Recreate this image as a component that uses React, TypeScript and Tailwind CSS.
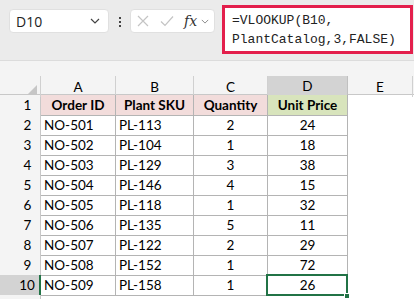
import React from 'react';

const rows = [
  ['NO-501', 'PL-113', '2', '24'],
  ['NO-502', 'PL-104', '1', '18'],
  ['NO-503', 'PL-129', '3', '38'],
  ['NO-504', 'PL-146', '4', '15'],
  ['NO-505', 'PL-118', '1', '32'],
  ['NO-506', 'PL-135', '5', '11'],
  ['NO-507', 'PL-122', '2', '29'],
  ['NO-508', 'PL-152', '1', '72'],
  ['NO-509', 'PL-158', '1', '26'],
];

const cols = 'grid grid-cols-[41px_75px_78px_74px_80px_65px_1fr]';
const cell = "font-['Lato',sans-serif] text-[13.5px] text-black";

function Chevron({ className }: { className?: string }) {
  return (
    <svg viewBox="0 0 10 6" className={className} fill="none" stroke="currentColor" strokeWidth="1.2">
      <path d="M1 1l4 4 4-4" />
    </svg>
  );
}

function FormulaBar() {
  return (
    <div className="h-[60px] bg-[#ebebeb] flex items-start">
      <div className="ml-[9px] mt-[9px] w-[100px] h-[24px] bg-white rounded-[4px] border border-[#e0e0e0] flex items-center justify-between pl-[6px] pr-[8px]">
        <span className="font-['Open_Sans',sans-serif] text-[14px] text-[#222]">D10</span>
        <Chevron className="w-[10px] h-[6px] text-[#444]" />
      </div>
      <div className="mt-[17px] ml-[10px] flex flex-col gap-[2px]">
        <span className="w-[2px] h-[2px] bg-[#444]" />
        <span className="w-[2px] h-[2px] bg-[#444]" />
        <span className="w-[2px] h-[2px] bg-[#444]" />
      </div>
      <div className="ml-[9px] mt-[9px] w-[85px] h-[24px] bg-white rounded-[4px] border border-[#e0e0e0] flex items-center pl-[6px] pr-[3px]">
        <svg viewBox="0 0 12 12" className="w-[12px] h-[12px] text-[#c4c4c4]" fill="none" stroke="currentColor" strokeWidth="1.2">
          <path d="M1 1l10 10M11 1L1 11" />
        </svg>
        <svg viewBox="0 0 14 12" className="ml-[11px] w-[14px] h-[12px] text-[#c4c4c4]" fill="none" stroke="currentColor" strokeWidth="1.2">
          <path d="M1 6.5l4 4L13 1.5" />
        </svg>
        <span className="ml-[10px] font-['DejaVu_Serif',serif] italic text-[14px] text-[#333] leading-none">fx</span>
        <Chevron className="ml-[4px] w-[8px] h-[5px] text-[#888]" />
      </div>
      <div className="ml-[7px] mt-[5px] w-[191px] h-[49px] bg-white border-[3px] border-[#e31f4c] pl-[7px] pt-[3px] font-['Liberation_Mono',monospace] text-[13px] leading-[19px] text-[#222]">
        <div>=VLOOKUP(B10,</div>
        <div>PlantCatalog,3,FALSE)</div>
      </div>
    </div>
  );
}

export default function App() {
  return (
    <div className="w-[414px] h-[299px] overflow-hidden bg-white">
      <FormulaBar />
      <div className="h-[16px] bg-[#f4f4f4] border-t border-[#dcdcdc]" />
      {/* column headers */}
      <div className={`${cols} h-[19px] bg-[#f4f4f4] border-b border-[#c8c8c8]`}>
        <div className="relative border-r border-[#d0d0d0]">
          <svg viewBox="0 0 10 10" className="absolute right-[3px] bottom-[2px] w-[10px] h-[10px]">
            <path d="M10 0L10 10L0 10Z" fill="#c6c6c6" />
          </svg>
        </div>
        {['A', 'B', 'C'].map((c) => (
          <div key={c} className={`${cell} border-r border-[#d0d0d0] flex items-center justify-center text-[#333]`}>
            {c}
          </div>
        ))}
        <div className={`${cell} bg-[#d3d3d3] border-b-2 border-[#217346] -mb-px border-r border-r-[#c0c0c0] flex items-center justify-center text-[#1b6b3f]`}>
          D
        </div>
        <div className={`${cell} border-r border-[#d0d0d0] flex items-center justify-center text-[#333]`}>E</div>
        <div />
      </div>
      {/* row 1 */}
      <div className={`${cols} h-[20px]`}>
        <div className={`${cell} bg-[#f4f4f4] border-r border-[#c8c8c8] border-b border-b-[#dadada] flex items-center justify-center pl-[15px] text-[#333]`}>1</div>
        {['Order ID', 'Plant SKU', 'Quantity'].map((h) => (
          <div key={h} className={`${cell} font-bold bg-[#f2dcdb] border-r border-b border-[#b4b4b4] flex items-center justify-center`}>
            {h}
          </div>
        ))}
        <div className={`${cell} font-bold bg-[#d8e4bc] border-r border-b border-[#b4b4b4] flex items-center justify-center`}>Unit Price</div>
        <div />
        <div />
      </div>
      {rows.map((r, i) => {
        const last = i === rows.length - 1;
        return (
          <div key={i} className={`${cols} h-[20px]`}>
            <div
              className={`${cell} border-b border-b-[#dadada] flex items-center justify-center pl-[15px] ${
                last ? 'bg-[#d3d3d3] border-r-2 border-r-[#217346] text-[#1b6b3f]' : 'bg-[#f4f4f4] border-r border-r-[#c8c8c8] text-[#333]'
              }`}
            >
              {i + 2}
            </div>
            <div className={`${cell} border-r border-b border-[#b4b4b4] flex items-center pl-[3px]`}>{r[0]}</div>
            <div className={`${cell} border-r border-b border-[#b4b4b4] flex items-center pl-[3px]`}>{r[1]}</div>
            <div className={`${cell} border-r border-b border-[#b4b4b4] flex items-center justify-center`}>{r[2]}</div>
            <div className={`${cell} relative border-r border-b border-[#b4b4b4] flex items-center justify-center`}>
              {r[3]}
              {last && (
                <>
                  <div className="absolute -left-[2px] -top-[1px] -right-px -bottom-px border-2 border-[#217346]" />
                  <div className="absolute -right-[3px] -bottom-[4px] w-[6px] h-[6px] bg-[#217346] border border-white" />
                </>
              )}
            </div>
            <div />
            <div />
          </div>
        );
      })}
      <div className={`${cols} h-[20px]`}>
        <div className="bg-[#f4f4f4] border-r border-[#c8c8c8]" />
      </div>
    </div>
  );
}
